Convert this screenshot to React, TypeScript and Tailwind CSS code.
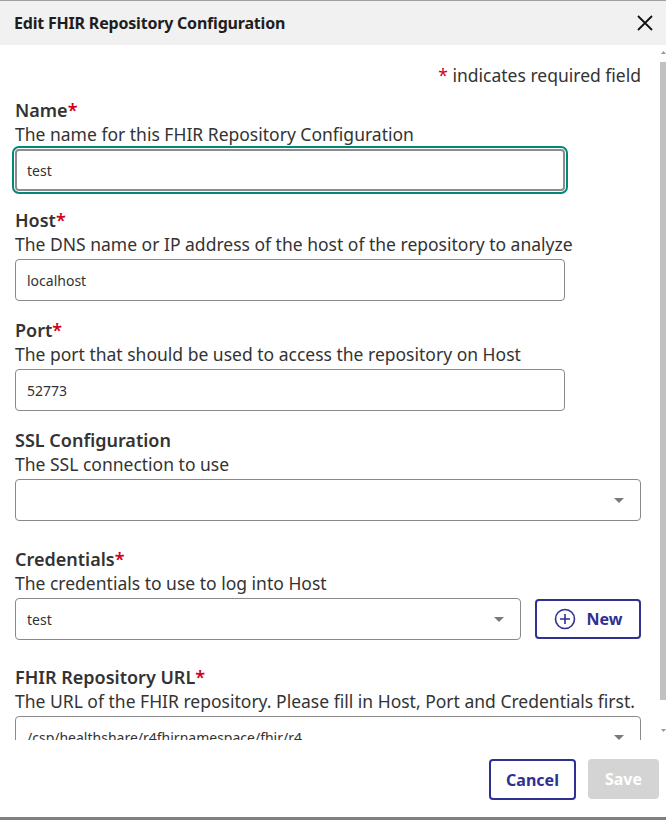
import React from "react";

const font = { fontFamily: '"Noto Sans", "Open Sans", sans-serif' };

type FieldProps = {
    label: string;
    required?: boolean;
    description: string;
    space?: string;
    children: React.ReactNode;
};

const Field = ({
    label,
    required,
    description,
    space = "mb-[17px]",
    children,
}: FieldProps) => (
    <div className={`flex flex-col ${space}`}>
        <div className="text-[18px] font-semibold leading-[24px] text-[#333]">
            {label}
            {required && <span className="text-[#d0021b]">*</span>}
        </div>
        <div className="text-[17.5px] leading-[25px] text-[#333] mb-[2px] whitespace-nowrap">
            {description}
        </div>
        {children}
    </div>
);

const Caret = () => (
    <svg width="10" height="5" viewBox="0 0 10 5" className="shrink-0">
        <path d="M0 0 L10 0 L5 5 Z" fill="#7a7a7a" />
    </svg>
);

const TextBox = ({ value, focused }: { value: string; focused?: boolean }) => (
    <div
        className={
            focused
                ? "w-[550px] h-[42px] rounded-[4px] border-2 border-[#8c8c8c] outline-2 outline-offset-1 outline-[#00897b] flex items-center px-[10px] text-[14px] text-[#333]"
                : "w-[550px] h-[42px] rounded-[4px] border border-[#8a8a8a] flex items-center px-[11px] text-[14px] text-[#333]"
        }
    >
        {value}
    </div>
);

const SelectBox = ({ value, width }: { value: string; width: string }) => (
    <div
        className={`${width} h-[42px] shrink-0 rounded-[4px] border border-[#8a8a8a] flex items-center justify-between pl-[11px] pr-[16px] text-[14px] text-[#333]`}
    >
        <span>{value}</span>
        <Caret />
    </div>
);

export default function App() {
    return (
        <div
            style={font}
            className="w-[666px] h-[820px] bg-white flex flex-col border-t border-[#a0a0a0] overflow-hidden"
        >
            <div className="h-[44px] shrink-0 bg-[#f1f1f1] flex items-center justify-between pl-[14px] pr-[13px]">
                <span className="text-[16px] font-bold text-[#1e1e1e] tracking-[-0.2px]">
                    Edit FHIR Repository Configuration
                </span>
                <svg width="16" height="16" viewBox="0 0 16 16">
                    <path
                        d="M1 1 L15 15 M15 1 L1 15"
                        stroke="#111"
                        strokeWidth="1.8"
                    />
                </svg>
            </div>

            <div className="h-[695px] shrink-0 flex overflow-hidden">
                <div className="flex-1 flex flex-col pl-[15px] pr-[19px] pt-[18px]">
                    <div className="text-[17.5px] leading-[24px] text-[#333] text-right mb-[11px]">
                        <span className="text-[#d0021b]">*</span> indicates
                        required field
                    </div>
                    <Field
                        label="Name"
                        required
                        description="The name for this FHIR Repository Configuration"
                    >
                        <TextBox value="test" focused />
                    </Field>
                    <Field
                        label="Host"
                        required
                        description="The DNS name or IP address of the host of the repository to analyze"
                    >
                        <TextBox value="localhost" />
                    </Field>
                    <Field
                        label="Port"
                        required
                        description="The port that should be used to access the repository on Host"
                    >
                        <TextBox value="52773" />
                    </Field>
                    <Field
                        label="SSL Configuration"
                        description="The SSL connection to use"
                        space="mb-[26px]"
                    >
                        <SelectBox value="" width="w-[626px]" />
                    </Field>
                    <Field
                        label="Credentials"
                        required
                        description="The credentials to use to log into Host"
                        space="mb-[25px]"
                    >
                        <div className="flex items-center gap-[14px]">
                            <SelectBox value="test" width="w-[506px]" />
                            <button className="w-[106px] h-[40px] shrink-0 rounded-[4px] border-2 border-[#2e3192] flex items-center justify-center gap-[11px] text-[16px] font-bold text-[#2e3192]">
                                <svg width="22" height="22" viewBox="0 0 22 22">
                                    <circle
                                        cx="11"
                                        cy="11"
                                        r="9.5"
                                        fill="none"
                                        stroke="#2e3192"
                                        strokeWidth="1.6"
                                    />
                                    <path
                                        d="M11 6 V16 M6 11 H16"
                                        stroke="#2e3192"
                                        strokeWidth="1.6"
                                    />
                                </svg>
                                New
                            </button>
                        </div>
                    </Field>
                    <Field
                        label="FHIR Repository URL"
                        required
                        description="The URL of the FHIR repository. Please fill in Host, Port and Credentials first."
                    >
                        <SelectBox
                            value="/csp/healthshare/r4fhirnamespace/fhir/r4"
                            width="w-[626px]"
                        />
                    </Field>
                </div>
                <div className="w-[6px] shrink-0 flex flex-col items-center pt-[6px]">
                    <svg width="5" height="3" viewBox="0 0 5 3">
                        <path d="M0 3 L5 3 L2.5 0 Z" fill="#999" />
                    </svg>
                    <div className="w-[6px] h-[638px] bg-[#c1c1c1] mt-[8px]" />
                    <div className="flex-1" />
                    <svg width="5" height="3" viewBox="0 0 5 3" className="mb-[8px]">
                        <path d="M0 0 L5 0 L2.5 3 Z" fill="#999" />
                    </svg>
                </div>
            </div>

            <div className="flex-1 flex items-start justify-end gap-[12px] pt-[19px] pr-[7px] bg-white border-b-[3px] border-[#808080]">
                <button className="w-[87px] h-[41px] rounded-[4px] border-2 border-[#2e3192] text-[16px] font-bold text-[#2e3192]">
                    Cancel
                </button>
                <button className="w-[71px] h-[40px] rounded-[4px] bg-[#d4d4d4] text-[16px] font-bold text-white">
                    Save
                </button>
            </div>
        </div>
    );
}
